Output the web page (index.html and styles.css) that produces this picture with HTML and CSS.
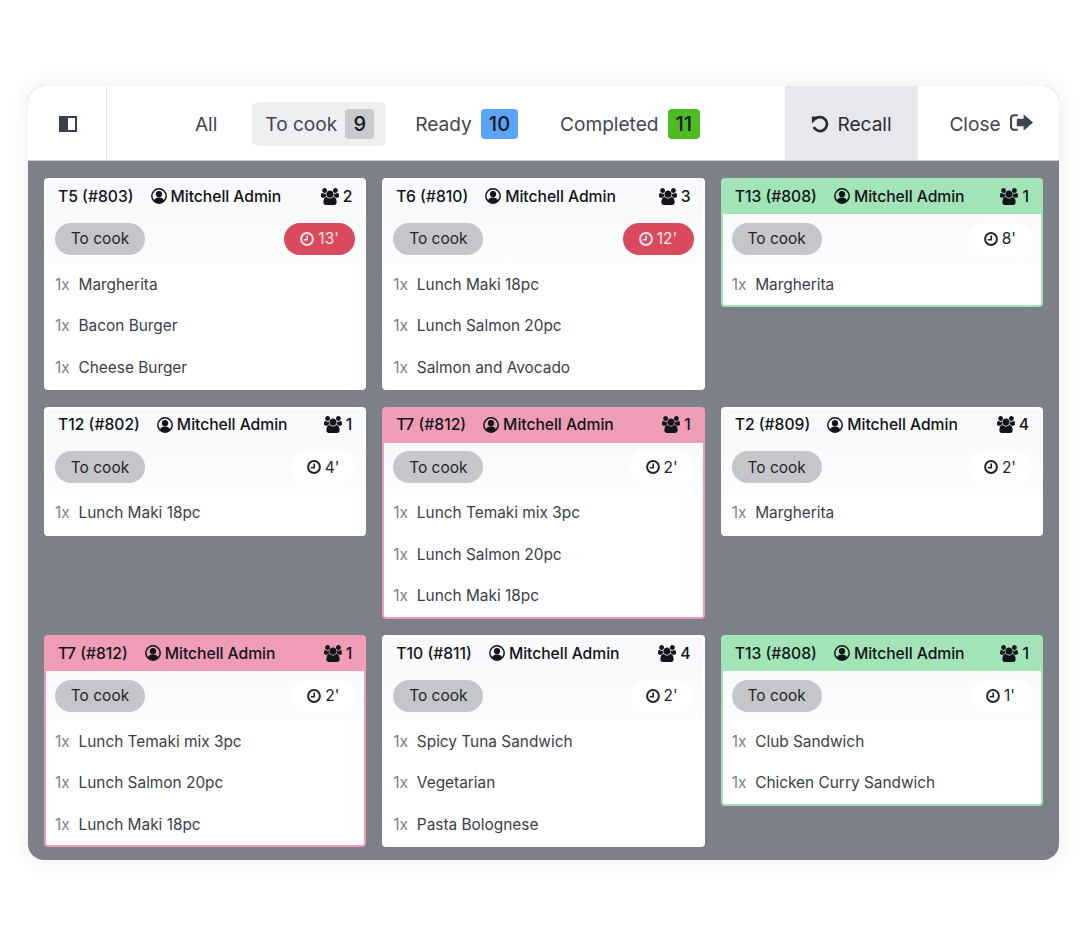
FILE: index.html
```html
<!DOCTYPE html>
<html lang="en">
<head>
<meta charset="utf-8">
<title>Kitchen Display</title>
<link rel="stylesheet" href="styles.css">
</head>
<body>
<svg class="defs" width="0" height="0" aria-hidden="true">
  <symbol id="i-users" viewBox="0 0 1920 1792"><path d="M593 896q-162 5-265 128h-134q-82 0-138-40.500t-56-118.500q0-353 124-353 6 0 43.500 21t97.500 42.500 119 21.500q67 0 133-23-5 37-5 66 0 139 81 256zm1071 637q0 120-73 189.500t-194 69.500h-874q-121 0-194-69.500t-73-189.500q0-53 3.500-103.500t14-109 26.500-108.500 43-97.500 62-81 85.500-53.500 111.500-20q10 0 43 21.500t73 48 107 48 135 21.500 135-21.500 107-48 73-48 43-21.500q61 0 111.500 20t85.500 53.500 62 81 43 97.500 26.500 108.500 14 109 3.500 103.500zm-1024-1277q0 106-75 181t-181 75-181-75-75-181 75-181 181-75 181 75 75 181zm704 384q0 159-112.500 271.500t-271.500 112.500-271.500-112.500-112.500-271.500 112.500-271.500 271.500-112.500 271.500 112.500 112.500 271.500zm576 225q0 78-56 118.500t-138 40.500h-134q-103-123-265-128 81-117 81-256 0-29-5-66 66 23 133 23 59 0 119-21.500t97.500-42.500 43.500-21q124 0 124 353zm-128-609q0 106-75 181t-181 75-181-75-75-181 75-181 181-75 181 75 75 181z"/></symbol>
  <symbol id="i-user" viewBox="0 0 16 16"><circle cx="8" cy="8" r="7.200" fill="none" stroke="currentColor" stroke-width="1.500"/><circle cx="8" cy="6.200" r="3.100"/><path d="M2.900 12.600C3.700 10.500 5.300 9.600 8 9.600s4.300.9 5.100 3C12 14 10.200 15 8 15s-4-1-5.100-2.400z"/></symbol>
  <symbol id="i-clock" viewBox="0 0 14 14"><circle cx="7" cy="7" r="5.900" fill="none" stroke="currentColor" stroke-width="2"/><path d="M7.200 3.400V7.800H3.800" fill="none" stroke="currentColor" stroke-width="1.600"/></symbol>
  <symbol id="i-undo" viewBox="0 0 18 18"><path d="M4.300 3.800A7 7 0 1 1 2.700 12.200" fill="none" stroke="currentColor" stroke-width="2.700"/><path d="M.8 1.400 8.200 1.400 1 8.400z"/></symbol>
  <symbol id="i-exit" viewBox="0 0 22 18"><path d="M7.500 2H4a3 3 0 0 0-3 3v8a3 3 0 0 0 3 3h3.500" fill="none" stroke="currentColor" stroke-width="2"/><path d="M13 1 22 9 13 17V12.500H6.500V5.500H13z"/></symbol>
  <symbol id="i-panel" viewBox="0 0 18 18"><path d="M0 1H18V17H0zM9 3V15H16V3z" fill-rule="evenodd"/><path d="M2 3H9V15H2z" opacity=".8"/></symbol>
</svg>

<main class="window">
  <header class="topbar">
    <button class="side-toggle" type="button" aria-label="Toggle sidebar"><svg class="ico-panel"><use href="#i-panel"/></svg></button>
    <nav class="tabs">
      <a class="tab tab-all">All</a>
      <a class="tab tab-active">To cook <span class="badge badge-grey">9</span></a>
      <a class="tab">Ready <span class="badge badge-blue">10</span></a>
      <a class="tab">Completed <span class="badge badge-green">11</span></a>
    </nav>
    <button class="recall" type="button"><svg class="ico-undo"><use href="#i-undo"/></svg>Recall</button>
    <button class="close" type="button">Close<svg class="ico-exit"><use href="#i-exit"/></svg></button>
  </header>

  <section class="board">
    <article class="card">
      <div class="card-head"><strong class="ref">T5 (#803)</strong><svg class="ico-user"><use href="#i-user"/></svg><span class="name">Mitchell Admin</span><svg class="ico-users"><use href="#i-users"/></svg><span class="count">2</span></div>
      <div class="status"><span class="pill">To cook</span><span class="timer timer-late"><svg class="ico-clock"><use href="#i-clock"/></svg>13'</span></div>
      <ul class="items">
        <li><span class="qty">1x</span>Margherita</li>
        <li><span class="qty">1x</span>Bacon Burger</li>
        <li><span class="qty">1x</span>Cheese Burger</li>
      </ul>
    </article>

    <article class="card">
      <div class="card-head"><strong class="ref">T6 (#810)</strong><svg class="ico-user"><use href="#i-user"/></svg><span class="name">Mitchell Admin</span><svg class="ico-users"><use href="#i-users"/></svg><span class="count">3</span></div>
      <div class="status"><span class="pill">To cook</span><span class="timer timer-late"><svg class="ico-clock"><use href="#i-clock"/></svg>12'</span></div>
      <ul class="items">
        <li><span class="qty">1x</span>Lunch Maki 18pc</li>
        <li><span class="qty">1x</span>Lunch Salmon 20pc</li>
        <li><span class="qty">1x</span>Salmon and Avocado</li>
      </ul>
    </article>

    <article class="card card-green">
      <div class="card-head"><strong class="ref">T13 (#808)</strong><svg class="ico-user"><use href="#i-user"/></svg><span class="name">Mitchell Admin</span><svg class="ico-users"><use href="#i-users"/></svg><span class="count">1</span></div>
      <div class="status"><span class="pill">To cook</span><span class="timer"><svg class="ico-clock"><use href="#i-clock"/></svg>8'</span></div>
      <ul class="items">
        <li><span class="qty">1x</span>Margherita</li>
      </ul>
    </article>

    <article class="card">
      <div class="card-head"><strong class="ref">T12 (#802)</strong><svg class="ico-user"><use href="#i-user"/></svg><span class="name">Mitchell Admin</span><svg class="ico-users"><use href="#i-users"/></svg><span class="count">1</span></div>
      <div class="status"><span class="pill">To cook</span><span class="timer"><svg class="ico-clock"><use href="#i-clock"/></svg>4'</span></div>
      <ul class="items">
        <li><span class="qty">1x</span>Lunch Maki 18pc</li>
      </ul>
    </article>

    <article class="card card-pink">
      <div class="card-head"><strong class="ref">T7 (#812)</strong><svg class="ico-user"><use href="#i-user"/></svg><span class="name">Mitchell Admin</span><svg class="ico-users"><use href="#i-users"/></svg><span class="count">1</span></div>
      <div class="status"><span class="pill">To cook</span><span class="timer"><svg class="ico-clock"><use href="#i-clock"/></svg>2'</span></div>
      <ul class="items">
        <li><span class="qty">1x</span>Lunch Temaki mix 3pc</li>
        <li><span class="qty">1x</span>Lunch Salmon 20pc</li>
        <li><span class="qty">1x</span>Lunch Maki 18pc</li>
      </ul>
    </article>

    <article class="card">
      <div class="card-head"><strong class="ref">T2 (#809)</strong><svg class="ico-user"><use href="#i-user"/></svg><span class="name">Mitchell Admin</span><svg class="ico-users"><use href="#i-users"/></svg><span class="count">4</span></div>
      <div class="status"><span class="pill">To cook</span><span class="timer"><svg class="ico-clock"><use href="#i-clock"/></svg>2'</span></div>
      <ul class="items">
        <li><span class="qty">1x</span>Margherita</li>
      </ul>
    </article>

    <article class="card card-pink">
      <div class="card-head"><strong class="ref">T7 (#812)</strong><svg class="ico-user"><use href="#i-user"/></svg><span class="name">Mitchell Admin</span><svg class="ico-users"><use href="#i-users"/></svg><span class="count">1</span></div>
      <div class="status"><span class="pill">To cook</span><span class="timer"><svg class="ico-clock"><use href="#i-clock"/></svg>2'</span></div>
      <ul class="items">
        <li><span class="qty">1x</span>Lunch Temaki mix 3pc</li>
        <li><span class="qty">1x</span>Lunch Salmon 20pc</li>
        <li><span class="qty">1x</span>Lunch Maki 18pc</li>
      </ul>
    </article>

    <article class="card">
      <div class="card-head"><strong class="ref">T10 (#811)</strong><svg class="ico-user"><use href="#i-user"/></svg><span class="name">Mitchell Admin</span><svg class="ico-users"><use href="#i-users"/></svg><span class="count">4</span></div>
      <div class="status"><span class="pill">To cook</span><span class="timer"><svg class="ico-clock"><use href="#i-clock"/></svg>2'</span></div>
      <ul class="items">
        <li><span class="qty">1x</span>Spicy Tuna Sandwich</li>
        <li><span class="qty">1x</span>Vegetarian</li>
        <li><span class="qty">1x</span>Pasta Bolognese</li>
      </ul>
    </article>

    <article class="card card-green">
      <div class="card-head"><strong class="ref">T13 (#808)</strong><svg class="ico-user"><use href="#i-user"/></svg><span class="name">Mitchell Admin</span><svg class="ico-users"><use href="#i-users"/></svg><span class="count">1</span></div>
      <div class="status"><span class="pill">To cook</span><span class="timer"><svg class="ico-clock"><use href="#i-clock"/></svg>1'</span></div>
      <ul class="items">
        <li><span class="qty">1x</span>Club Sandwich</li>
        <li><span class="qty">1x</span>Chicken Curry Sandwich</li>
      </ul>
    </article>
  </section>
</main>
</body>
</html>
```

FILE: styles.css
```css
* { box-sizing: border-box; }

html, body { margin: 0; height: 100%; }

body {
  background: #fff;
  padding: 86px 28px 86px;
  font-family: Inter, "Liberation Sans", sans-serif;
  color: #111418;
}

.defs { position: absolute; }

svg { fill: currentColor; display: block; flex: none; }

.window {
  height: 774px;
  border-radius: 16px;
  overflow: hidden;
  display: flex;
  flex-direction: column;
  background: #7d8088;
  box-shadow: 0 0 22px rgba(40, 44, 60, .09);
}

/* top bar */
.topbar {
  height: 75px;
  flex: none;
  display: flex;
  align-items: stretch;
  background: #fff;
  border-bottom: 1px solid #c9ccd1;
  color: #3f4652;
  font-size: 19.100px;
}

.topbar button {
  border: 0;
  background: none;
  font: inherit;
  color: inherit;
  padding: 0;
  display: flex;
  align-items: center;
}

.topbar .side-toggle {
  width: 79px;
  flex: none;
  justify-content: center;
  padding: 2px 0 0 2px;
  border-right: 1px solid #dfe1e5;
  color: #39404c;
}

.ico-panel { width: 18px; height: 18px; }

.tabs {
  flex: 1;
  display: flex;
  align-items: center;
  justify-content: center;
  gap: 16px;
  padding: 2px 0 0 3px;
}

.tab {
  height: 44px;
  padding: 0 13px;
  border-radius: 6px;
  display: flex;
  align-items: center;
  gap: 9px;
}

.tab-all { margin-right: 6px; }

.tab-active { background: #eeeff1; gap: 8px; padding-right: 12px; }

.badge {
  height: 30px;
  min-width: 29px;
  padding: 0 8px;
  border-radius: 4px;
  display: flex;
  align-items: center;
  justify-content: center;
  color: #14181e;
  font-size: 20px;
  font-weight: 500;
}

.badge-grey { background: #c9cacc; }
.badge-blue { background: #5ba3fb; }
.badge-green { background: #4dbb22; }

.topbar .recall {
  width: 133px;
  flex: none;
  justify-content: center;
  gap: 8px;
  padding-top: 1px;
  background: #e6e8ed;
  color: #272c35;
}

.ico-undo { width: 18px; height: 18px; }

.topbar .close {
  width: 141px;
  flex: none;
  justify-content: center;
  gap: 9px;
  padding: 1px 0 0 5px;
}

.ico-exit { width: 23px; height: 19px; margin-top: -2px; }

/* board */
.board {
  flex: 1;
  padding: 17px 16px;
  display: grid;
  grid-template-columns: repeat(3, 1fr);
  grid-auto-rows: min-content;
  align-items: start;
  gap: 16.500px 16px;
}

.card {
  background: #fff;
  border: 2px solid #fff;
  border-radius: 4px;
  overflow: hidden;
}

.card-green { border-color: #a3e3b8; }
.card-pink { border-color: #ef9db6; }
.card-green .card-head { background: #a3e3b8; }
.card-pink .card-head { background: #ef9db6; }

.card-head {
  height: 34px;
  padding: 0 12px 2px;
  display: flex;
  align-items: center;
  font-size: 15.700px;
  font-weight: 500;
  color: #111418;
  background: #f8f9fb;
}

.ref { font-weight: 500; margin-right: 17px; }

.name { letter-spacing: -.05px; }

.ico-user { width: 16px; height: 16px; margin-right: 4px; }

.ico-users { width: 18px; height: 17px; margin-left: auto; margin-right: 4px; }

.status {
  height: 49.500px;
  padding: 0 9px;
  display: flex;
  align-items: center;
  justify-content: space-between;
  background: linear-gradient(#f8f9fb, #fcfdfe);
  font-size: 15.500px;
}

.pill {
  height: 32px;
  width: 90px;
  border-radius: 16px;
  background: #c4c6c9;
  color: #22262c;
  display: flex;
  align-items: center;
  justify-content: center;
}

.timer {
  height: 32px;
  min-width: 62px;
  padding: 0 16px;
  border-radius: 16px;
  background: #fff;
  color: #22262c;
  display: flex;
  align-items: center;
  gap: 4px;
}

.timer-late {
  background: #d94a5f;
  color: #fbe6e9;
  min-width: 71px;
}

.ico-clock { width: 14px; height: 14px; }

.items {
  list-style: none;
  margin: 0;
  padding: 0 9px;
  font-size: 15.400px;
  color: #3a3f47;
}

.items li {
  height: 41.500px;
  display: flex;
  align-items: center;
}

.qty {
  color: #7b7f86;
  width: 23.500px;
  flex: none;
}
```
